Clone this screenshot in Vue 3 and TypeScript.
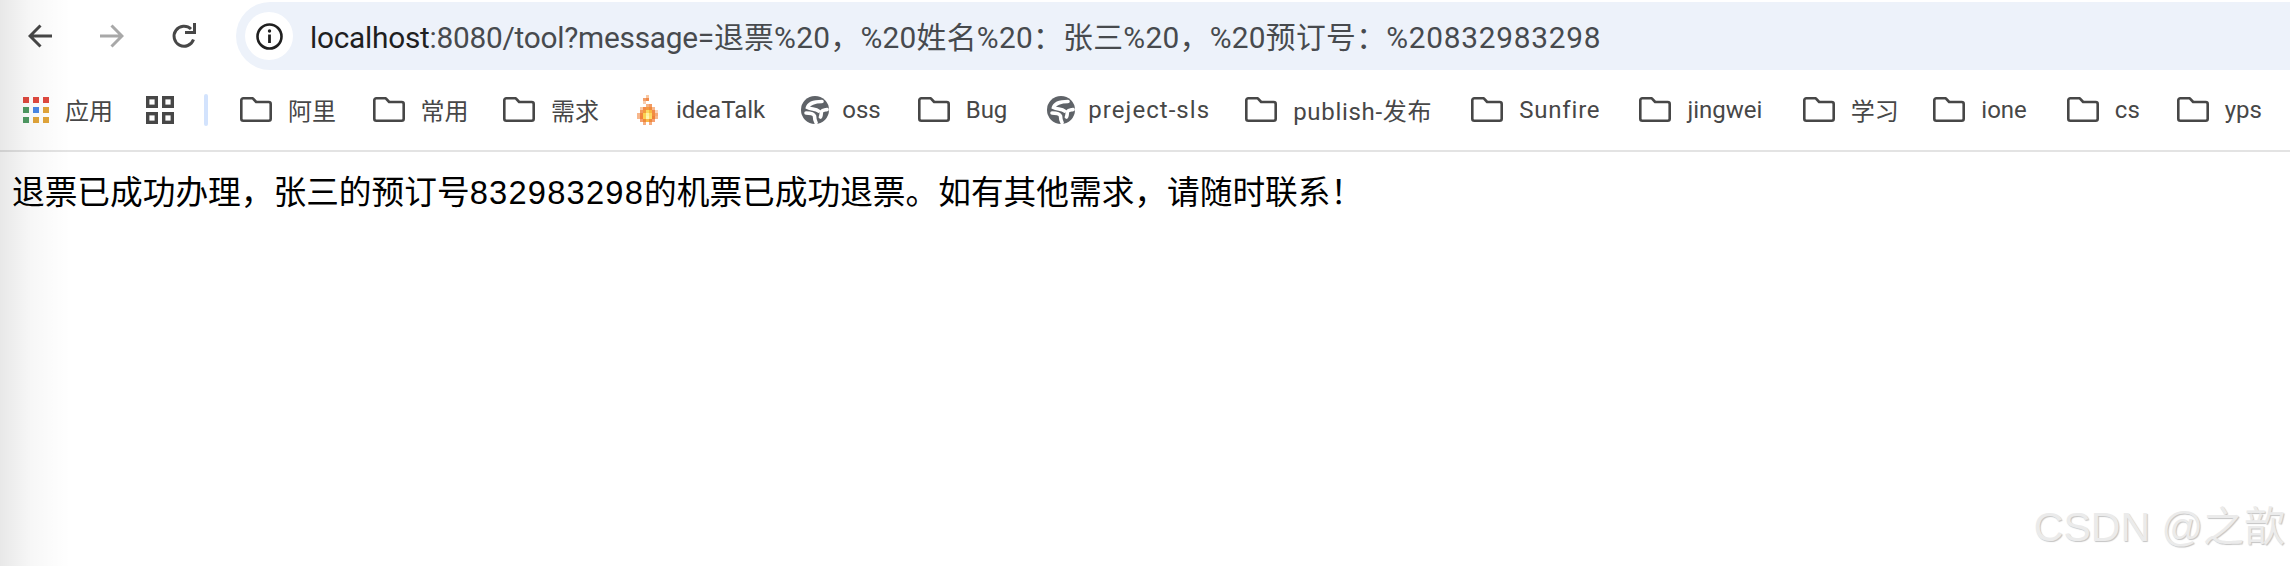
<script setup lang="ts">
interface Bookmark {
  label: string
  icon: 'folder' | 'globe' | 'flame'
  gap: number
  spacing?: number
}

const bookmarks: Bookmark[] = [
  { label: '阿里', icon: 'folder', gap: 0 },
  { label: '常用', icon: 'folder', gap: 36.5 },
  { label: '需求', icon: 'folder', gap: 34.5 },
  { label: 'ideaTalk', icon: 'flame', gap: 38 },
  { label: 'oss', icon: 'globe', gap: 36 },
  { label: 'Bug', icon: 'folder', gap: 37 },
  { label: 'preject-sls', icon: 'globe', gap: 40, spacing: 1.05 },
  { label: 'publish-发布', icon: 'folder', gap: 35, spacing: 0.7 },
  { label: 'Sunfire', icon: 'folder', gap: 39, spacing: 0.8 },
  { label: 'jingwei', icon: 'folder', gap: 39 },
  { label: '学习', icon: 'folder', gap: 40.5 },
  { label: 'ione', icon: 'folder', gap: 34.5 },
  { label: 'cs', icon: 'folder', gap: 40 },
  { label: 'yps', icon: 'folder', gap: 37 },
]

const flamePixels: [number, number, string][] = [
  [3, 0, '#f9c9a4'],
  [2, 1, '#f2a06c'], [3, 1, '#f08a4c'],
  [2, 2, '#f8cdb0'],
  [3, 3, '#f5b083'], [4, 3, '#f39a60'],
  [1, 4, '#f8c8a4'], [2, 4, '#f28a48'], [3, 4, '#f39a40'], [4, 4, '#f08a3c'], [5, 4, '#f7b98e'],
  [1, 5, '#f29a60'], [2, 5, '#f39a3c'], [3, 5, '#fbd860'], [4, 5, '#f8b840'], [5, 5, '#f08a48'], [6, 5, '#f9d4bc'],
  [0, 6, '#f7b78c'], [1, 6, '#f0853c'], [2, 6, '#fbd050'], [3, 6, '#fef0a0'], [4, 6, '#fcd860'], [5, 6, '#f08c40'], [6, 6, '#f5a878'],
  [0, 7, '#f7b78c'], [1, 7, '#f0803c'], [2, 7, '#fbd050'], [3, 7, '#fef4b0'], [4, 7, '#fcdc68'], [5, 7, '#ef8038'], [6, 7, '#f7b78c'],
  [1, 8, '#f4a070'], [2, 8, '#f08a3c'], [3, 8, '#f8b848'], [4, 8, '#f08a3c'], [5, 8, '#f4a070'],
  [2, 9, '#f5ad80'], [4, 9, '#f5ad80'],
]
</script>

<template>
  <div class="page">
    <header class="toolbar">
      <svg class="nav" width="24" height="24" viewBox="0 0 24 24" fill="none" stroke="#474747" stroke-width="3">
        <path d="M24 12H2M12.500 1.500 2 12 12.500 22.500" />
      </svg>
      <svg class="nav forward" width="24" height="24" viewBox="0 0 24 24" fill="none" stroke="#a8a8a8" stroke-width="3">
        <path d="M0 12h22M11.500 1.500 22 12 11.500 22.500" />
      </svg>
      <svg class="nav reload" width="26" height="26" viewBox="0 0 26 26" fill="none" stroke="#474747" stroke-width="3">
        <path d="M22.500 16.500A10 10 0 1 1 20 6" />
        <path d="M25 0v11H14v-3h8V0z" fill="#474747" stroke="none" />
      </svg>
      <div class="omnibox">
        <span class="chip">
          <svg width="27" height="27" viewBox="0 0 27 27" fill="none" stroke="#1f1f1f" stroke-width="2.600">
            <circle cx="13.500" cy="13.500" r="12" />
            <path d="M13.500 11.500V20" stroke-width="2.800" />
            <circle cx="13.500" cy="8" r="1.700" fill="#1f1f1f" stroke="none" />
          </svg>
        </span>
        <span class="url"><span class="url-start"><span class="host">localhost</span>:8080/tool?message=</span><span class="url-mid">退票%20，%20姓名%20：张三%20，%20预订号：</span><span class="url-end">%20832983298</span></span>
      </div>
    </header>

    <nav class="bookmarks">
      <svg class="apps" width="26" height="26" viewBox="0 0 26 26">
        <rect x="0" y="0" width="6" height="6" fill="#e0493f" />
        <rect x="10" y="0" width="6" height="6" fill="#e0493f" />
        <rect x="20" y="0" width="6" height="6" fill="#e0493f" />
        <rect x="0" y="10" width="6" height="6" fill="#4f9b63" />
        <rect x="10" y="10" width="6" height="6" fill="#4a88e8" />
        <rect x="20" y="10" width="6" height="6" fill="#e2a53a" />
        <rect x="0" y="20" width="6" height="6" fill="#4f9b63" />
        <rect x="10" y="20" width="6" height="6" fill="#e2a53a" />
        <rect x="20" y="20" width="6" height="6" fill="#e2a53a" />
      </svg>
      <span class="label apps-label">应用</span>
      <svg class="grid" width="28" height="28" viewBox="0 0 28 28" fill="none" stroke="#474747" stroke-width="3.400">
        <rect x="1.700" y="1.700" width="8.600" height="8.600" />
        <rect x="17.700" y="1.700" width="8.600" height="8.600" />
        <rect x="1.700" y="17.700" width="8.600" height="8.600" />
        <rect x="17.700" y="17.700" width="8.600" height="8.600" />
      </svg>
      <span class="divider"></span>
      <div class="items">
        <a v-for="b in bookmarks" :key="b.label" class="item" :class="b.icon" :style="{ marginLeft: b.gap + 'px' }">
          <svg v-if="b.icon === 'folder'" class="icon" width="32" height="25" viewBox="0 0 32 25" fill="none" stroke="#474747" stroke-width="2.600" stroke-linejoin="round">
            <path d="M3.300 1.300h9.500l3.400 3.700h12.500a2 2 0 0 1 2 2v14.700a2 2 0 0 1-2 2H3.300a2 2 0 0 1-2-2V3.300a2 2 0 0 1 2-2z" />
          </svg>
          <svg v-else-if="b.icon === 'globe'" class="icon" width="28" height="28" viewBox="0 0 28 28">
            <circle cx="14" cy="14" r="14" fill="#5f6368" />
            <g fill="none" stroke="#fff" stroke-width="3.600" stroke-linecap="round">
              <path d="M21 5.500C14 5.500 7.500 7.500 6.500 11.500C10 13.500 15 12.500 17.500 15" />
              <path d="M5 17C8.500 17 12.500 17 13.500 20C13.500 22.500 14 24.500 15 26.500" />
              <path d="M26 13.500C24 14 21.500 14 20.500 15.500C20 17.500 20.500 19 19.500 21" />
            </g>
          </svg>
          <svg v-else class="icon" width="21" height="30" viewBox="0 0 21 30" shape-rendering="crispEdges">
            <rect v-for="(p, i) in flamePixels" :key="i" :x="p[0] * 3" :y="p[1] * 3" width="3" height="3" :fill="p[2]" />
          </svg>
          <span class="label" :style="{ letterSpacing: (b.spacing ?? 0) + 'px' }">{{ b.label }}</span>
        </a>
      </div>
    </nav>

    <main class="content">退票已成功办理，张三的预订号<span class="digits">832983298</span>的机票已成功退票。如有其他需求，请随时联系！</main>

    <div class="edge-shadow"></div>
    <div class="watermark">CSDN @之歆</div>
  </div>
</template>

<style>
html, body { margin: 0; background: #fff; overflow: hidden; }
</style>

<style scoped>
.page {
  position: relative;
  width: 2290px;
  height: 566px;
  overflow: hidden;
  background: #fff;
  font-family: "Roboto", "Noto Sans CJK SC", sans-serif;
}
.toolbar {
  display: flex;
  align-items: center;
  height: 72px;
  padding-left: 28px;
  box-sizing: border-box;
}
.nav { flex: none; }
.forward { margin-left: 48px; }
.reload { margin-left: 47px; }
.omnibox {
  flex: 1;
  display: flex;
  align-items: center;
  height: 68px;
  margin-left: 39px;
  margin-right: -40px;
  padding-left: 9px;
  background: #edf2fa;
  border-radius: 34px;
}
.chip {
  flex: none;
  display: flex;
  align-items: center;
  justify-content: center;
  width: 48px;
  height: 48px;
  border-radius: 50%;
  background: #fff;
}
.url {
  margin-left: 17px;
  padding-bottom: 3px;
  font-size: 29.8px;
  color: #474a4e;
  white-space: nowrap;
}
.url-start { letter-spacing: -0.25px; }
.url-mid { letter-spacing: 0.3px; }
.url-end { letter-spacing: 0.75px; }
.host { color: #1f1f1f; }
.bookmarks {
  display: flex;
  align-items: center;
  height: 80px;
  padding: 0 0 3px 23px;
  box-sizing: border-box;
  border-bottom: 2px solid #e3e3e3;
}
.apps { flex: none; }
.apps-label { margin-left: 16px; }
.grid { flex: none; margin-left: 33px; }
.divider {
  flex: none;
  width: 4px;
  height: 32px;
  margin-left: 30px;
  margin-right: 32px;
  border-radius: 2px;
  background: #d3e3fd;
}
.items { display: flex; align-items: center; }
.item { display: flex; align-items: center; gap: 16px; }
.item.globe { gap: 13px; }
.item.flame { gap: 18px; }
.icon { flex: none; display: block; }
.label {
  font-size: 24px;
  color: #474747;
  white-space: nowrap;
}
.content {
  padding: 21px 0 0 12px;
  font-size: 32.7px;
  line-height: 40px;
  color: #000;
  font-family: "Liberation Sans", "Noto Sans CJK SC", sans-serif;
  white-space: nowrap;
}
.digits { letter-spacing: 1.2px; }
.edge-shadow {
  position: absolute;
  left: 0;
  top: 0;
  width: 70px;
  height: 566px;
  pointer-events: none;
  background: linear-gradient(to right, rgba(0, 0, 0, 0.09), rgba(0, 0, 0, 0.03) 45%, rgba(0, 0, 0, 0));
}
.watermark {
  position: absolute;
  right: 5px;
  bottom: 15px;
  font-family: "Liberation Sans", "Noto Sans CJK SC", sans-serif;
  font-size: 41px;
  line-height: 48px;
  color: #ebebeb;
  text-shadow: 1px 1px 1px #c4c4c4;
  white-space: nowrap;
}
</style>
